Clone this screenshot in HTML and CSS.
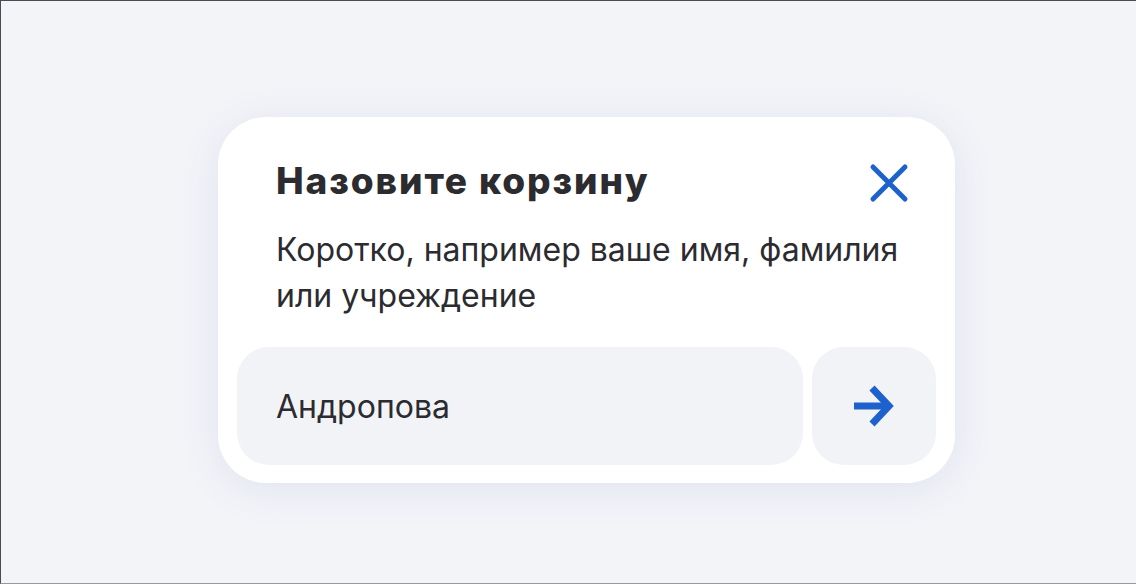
FILE: index.html
```html
<!DOCTYPE html>
<html lang="ru">
<head>
  <meta charset="UTF-8">
  <meta name="viewport" content="width=device-width, initial-scale=1.0">
  <title>Назовите корзину</title>
  <link rel="stylesheet" href="styles.css">
</head>
<body>
  <div class="page">
    <div class="card">
      <div class="card-head">
        <h1 class="card-title">Назовите корзину</h1>
        <button class="close-btn" type="button" aria-label="Закрыть">
          <svg width="40" height="40" viewBox="0 0 40 40">
            <path d="M4 4 L36 36 M36 4 L4 36" stroke="#1d62cc" stroke-width="5" stroke-linecap="round" fill="none"/>
          </svg>
        </button>
      </div>
      <p class="card-text">Коротко, например ваше имя, фамилия или учреждение</p>
      <form class="name-form">
        <input class="name-input" type="text" value="Андропова">
        <button class="send-btn" type="submit" aria-label="Сохранить">
          <svg width="44" height="44" viewBox="0 0 44 44">
            <path d="M2 22 H36" stroke="#1d62cc" stroke-width="7" fill="none"/>
            <path d="M20 4 L37 22 L20 40" stroke="#1d62cc" stroke-width="7" stroke-linejoin="miter" fill="none"/>
          </svg>
        </button>
      </form>
    </div>
  </div>
</body>
</html>
```

FILE: styles.css
```css
body {
  margin: 0;
  font-family: Inter, 'Noto Sans', sans-serif;
  color: #2b2b30;
}
.page {
  box-sizing: border-box;
  height: 584px;
  padding: 116px 0 0 217px;
  background: #f3f4f8;
  border-top: 1px solid #4a4a52;
  border-left: 1px solid #4a4a52;
  border-bottom: 1px solid #9a9a9e;
}
.card {
  box-sizing: border-box;
  width: 737px;
  padding: 42px 19px 18px 19px;
  background: #fff;
  border-radius: 48px;
  box-shadow: 0 6px 40px rgba(70, 90, 170, 0.10);
}
.card-head {
  display: flex;
  justify-content: space-between;
  align-items: flex-start;
  padding: 0 27px 0 39px;
}
.card-title {
  margin: 0;
  font-size: 37px;
  line-height: 44px;
  font-weight: 800;
  letter-spacing: 1.9px;
}
.close-btn {
  margin-top: 4px;
  padding: 0;
  width: 40px;
  height: 40px;
  border: none;
  background: none;
  cursor: pointer;
}
.close-btn svg {
  display: block;
}
.card-text {
  margin: 24px 0 0 0;
  padding: 0 20px 0 39px;
  font-size: 32px;
  line-height: 46px;
}
.name-form {
  display: flex;
  gap: 9px;
  margin-top: 28px;
}
.name-input {
  flex: 1;
  min-width: 0;
  height: 118px;
  box-sizing: border-box;
  padding: 0 39px;
  border: none;
  border-radius: 32px;
  background: #f2f3f7;
  font-family: inherit;
  font-size: 32px;
  color: #2b2b30;
  outline: none;
}
.send-btn {
  width: 124px;
  height: 118px;
  border: none;
  border-radius: 32px;
  background: #f2f3f7;
  display: flex;
  align-items: center;
  justify-content: center;
  cursor: pointer;
}
```
